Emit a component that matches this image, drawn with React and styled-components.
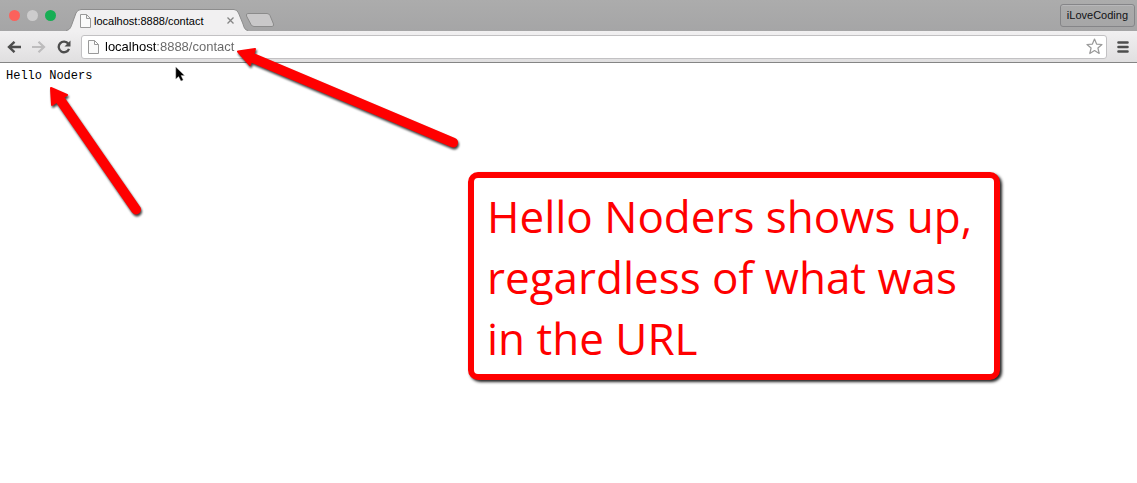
import React from "react";
import styled, { createGlobalStyle } from "styled-components";

const GlobalStyle = createGlobalStyle`
  * { box-sizing: border-box; }
  body { margin: 0; background: #fff; }
  button { padding: 0; border: 0; background: none; font: inherit; color: inherit; }
  svg { display: block; }
`;

const Browser = styled.div`
  position: relative;
  min-height: 100vh;
  overflow: hidden;
  font-family: "Liberation Sans", Arial, sans-serif;
`;

const TabStrip = styled.header`
  display: flex;
  height: 31px;
  background: linear-gradient(#acacac, #a5a5a6);
`;

const WindowControls = styled.div`
  display: flex;
  gap: 7px;
  padding: 10px 10px 0 9px;
`;

const WindowButton = styled.button`
  width: 11px;
  height: 11px;
  border-radius: 50%;
  background: ${(p) => p.$color};
`;

const Tab = styled.div`
  position: relative;
  display: flex;
  align-items: center;
  width: 182px;
  padding: 10px 14px 0 14px;
`;

const TabShape = styled.svg`
  position: absolute;
  left: 0;
  bottom: 0;
`;

const TabTitle = styled.span`
  position: relative;
  flex: 1;
  margin-left: 3px;
  font-size: 11px;
  line-height: 20px;
  color: #000;
  white-space: nowrap;
`;

const IconButton = styled.button`
  position: relative;
  display: flex;
  flex: none;
  align-items: center;
  justify-content: center;
  width: ${(p) => p.$width}px;
  height: 20px;
`;

const NewTab = styled.button`
  align-self: flex-start;
  margin: 13px 0 0 -3px;
`;

const Profile = styled.button`
  align-self: flex-start;
  height: 23px;
  margin: 4px 2px 0 auto;
  && {
    padding: 0 6px;
    border: 1px solid #858588;
    font-size: 11px;
    line-height: 21px;
    color: #111114;
  }
  border-radius: 3px;
  box-shadow: inset 0 1px 0 #b8b8ba;
`;

const Toolbar = styled.nav`
  display: flex;
  align-items: center;
  gap: 5px;
  height: 32px;
  padding: 0 4px;
  border-bottom: 1px solid #858585;
  background: linear-gradient(#f1f0f1, #e0dfe0);
`;

const AddressBar = styled.label`
  display: flex;
  flex: 1;
  align-items: center;
  height: 24px;
  margin: 0 1px 0 2px;
  padding: 0 3px 0 6px;
  border: 1px solid #c2c1c3;
  border-radius: 3px;
  background: #fff;
`;

const AddressInput = styled.input`
  flex: 1;
  min-width: 0;
  height: 20px;
  margin-left: 6px;
  padding: 0;
  border: 0;
  outline: 0;
  font: 13px/20px "Liberation Sans", Arial, sans-serif;
  color: transparent;
  background: linear-gradient(90deg, #000 51px, #666 51px);
  background-clip: text;
  caret-color: #222;
`;

const Page = styled.main`
  padding: 5px 6px;
`;

const Output = styled.pre`
  margin: 0;
  font: 12px/16px "Liberation Mono", "Courier New", monospace;
  color: #000;
`;

const Callout = styled.aside`
  position: absolute;
  left: 468px;
  top: 172px;
  width: 532px;
  padding: 8px 12px 5px 13px;
  border: 6px solid #f00;
  border-radius: 10px;
  background: #fff;
  box-shadow: 2px 2px 3px #222;
  font-family: "Open Sans", "Noto Sans", sans-serif;
  font-size: 44px;
  line-height: 61px;
  color: #f00;
`;

const Overlay = styled.svg`
  position: absolute;
  left: 0;
  top: 0;
  pointer-events: none;
  filter: ${(p) => (p.$shadow ? "drop-shadow(1px 2px 1px rgba(0, 0, 0, 0.75))" : "none")};
`;

const PageGlyph = styled.svg`
  position: relative;
  flex: none;
`;

function PageIcon() {
  return (
    <PageGlyph width="11" height="14" viewBox="0 0 11 14" aria-hidden="true">
      <path d="M.5 .5H6.500L10.500 4.500V13.500H.5ZM6.500 .5V4.500H10.500" fill="#fafafa" stroke="#999" />
    </PageGlyph>
  );
}

function Arrow({ head, shaft }) {
  return (
    <g fill="#f00" stroke="#f00" strokeLinecap="round" strokeLinejoin="round">
      <path d={head} strokeWidth="2" />
      <path d={shaft} strokeWidth="10" />
    </g>
  );
}

export default function App() {
  return (
    <Browser>
      <GlobalStyle />
      <TabStrip>
        <WindowControls>
          <WindowButton $color="#fb625c" aria-label="Close window" />
          <WindowButton $color="#cdcccd" aria-label="Minimize window" />
          <WindowButton $color="#17ae54" aria-label="Zoom window" />
        </WindowControls>
        <Tab>
          <TabShape width="182" height="22" viewBox="0 0 182 22" aria-hidden="true">
            <path d="M0 22C4 21 5 18 6 15L10 4Q11.500 .5 15 .5H168Q171 .5 172.500 4L177 15C178 19 179 21 182 22Z" fill="#f1f0f1" />
            <path d="M0 21.500C4 21 5 18 6 15L10 4Q11.500 .5 15 .5H168Q171 .5 172.500 4L177 15C178 19 179 21 182 21.500" fill="none" stroke="#8d8d8d" />
          </TabShape>
          <PageIcon />
          <TabTitle>localhost:8888/contact</TabTitle>
          <IconButton $width={8} aria-label="Close tab">
            <svg width="7" height="7" viewBox="0 0 7 7">
              <path d="M.5 .5L6.500 6.500M6.500 .5L.5 6.500" stroke="#858585" strokeWidth="1.300" />
            </svg>
          </IconButton>
        </Tab>
        <NewTab aria-label="New tab">
          <svg width="30" height="14" viewBox="0 0 30 14">
            <path d="M3 .5H22Q24 .5 25 2.500L28.500 11Q29 13.500 27 13.500H9Q7 13.500 6 11.500L1.500 3Q.8 .5 3 .5Z" fill="#c9c8c9" stroke="#8b8b8b" />
          </svg>
        </NewTab>
        <Profile>iLoveCoding</Profile>
      </TabStrip>
      <Toolbar>
        <IconButton $width={20} aria-label="Back">
          <svg width="14" height="12" viewBox="0 0 14 12" fill="none" stroke="#4d4d4d" strokeWidth="2.400">
            <path d="M14 6H2M7.500 .8L2 6L7.500 11.200" />
          </svg>
        </IconButton>
        <IconButton $width={20} aria-label="Forward">
          <svg width="14" height="12" viewBox="0 0 14 12" fill="none" stroke="#bdbcbd" strokeWidth="2.200">
            <path d="M0 6H12M6.500 .8L12 6L6.500 11.200" />
          </svg>
        </IconButton>
        <IconButton $width={20} aria-label="Reload">
          <svg width="14" height="14" viewBox="0 0 14 14">
            <path d="M11.300 3.800A5.300 5.300 0 1 0 12 8.800" fill="none" stroke="#4d4d4d" strokeWidth="2.300" />
            <path d="M13.500 .5V6.500H7.500Z" fill="#4d4d4d" />
          </svg>
        </IconButton>
        <AddressBar>
          <PageIcon />
          <AddressInput aria-label="Address" defaultValue="localhost:8888/contact" spellCheck={false} />
          <IconButton $width={17} aria-label="Bookmark this page">
            <svg width="17" height="17" viewBox="0 0 17 17">
              <path d="M8.500 1L10.600 6.100L16 6.500L11.900 10L13.200 15.500L8.500 12.500L3.800 15.500L5.100 10L1 6.500L6.400 6.100Z" fill="#fff" stroke="#999" strokeWidth="1.200" strokeLinejoin="round" />
            </svg>
          </IconButton>
        </AddressBar>
        <IconButton $width={20} aria-label="Menu">
          <svg width="12" height="12" viewBox="0 0 12 12">
            <path d="M1.500 1.500H10.500M1.500 6H10.500M1.500 10.500H10.500" stroke="#4d4d4d" strokeWidth="2.600" strokeLinecap="round" />
          </svg>
        </IconButton>
      </Toolbar>
      <Page>
        <Output>Hello Noders</Output>
      </Page>
      <Callout>Hello Noders shows up, regardless of what was in the URL</Callout>
      <Overlay $shadow width="470" height="225" viewBox="0 0 470 225" aria-hidden="true">
        <Arrow head="M238 51.500L255 49L250 65Z" shaft="M254 58.500L453 142.500" />
        <Arrow head="M51 88L67 95L52 105Z" shaft="M61 101L136 209.500" />
      </Overlay>
      <Overlay width="190" height="90" viewBox="0 0 190 90" aria-hidden="true">
        <path d="M175.800 67V79L178.600 76.500L181 81L183.200 80L181 75.500H184.500Z" fill="#000" stroke="#bbb" strokeWidth=".4" />
      </Overlay>
    </Browser>
  );
}
